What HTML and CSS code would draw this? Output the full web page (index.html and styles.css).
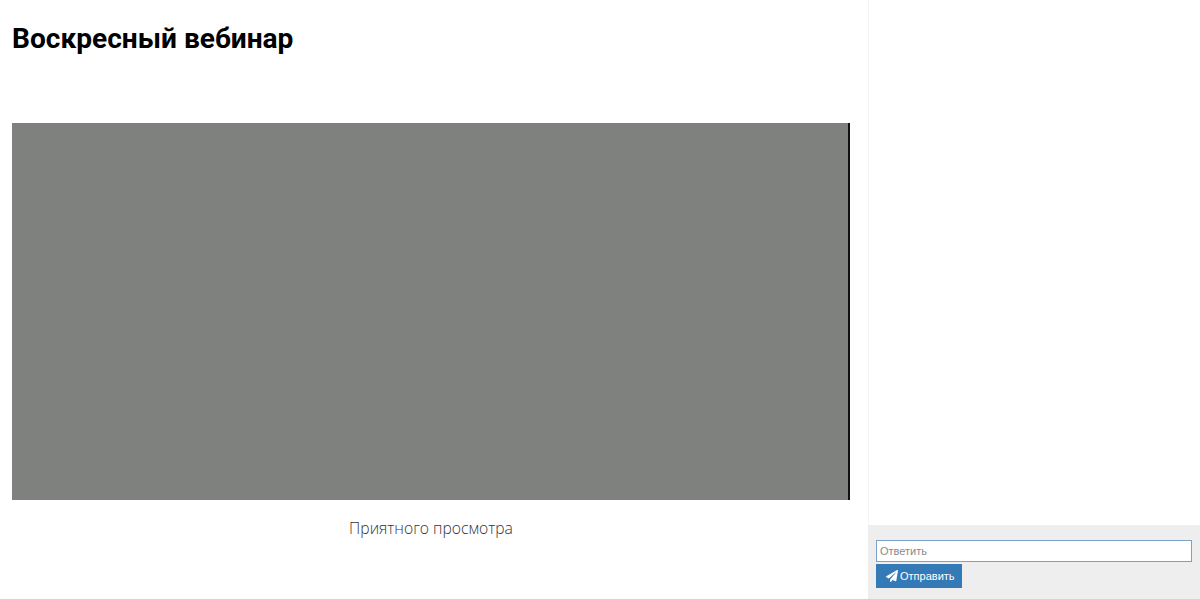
FILE: index.html
```html
<!DOCTYPE html>
<html lang="en">
<head>
    <meta charset="UTF-8">
    <meta name="viewport" content="width=device-width, initial-scale=1.0">
    <title>Воскресный вебинар</title>
    <link rel="stylesheet" href="styles.css">
</head>
<body>
    <div class="layout">
        <!-- Video column -->
        <div class="main">
            <h1>Воскресный вебинар</h1>
            <div class="video"></div>
            <p class="caption">Приятного просмотра</p>
        </div>

        <!-- Chat column -->
        <div class="chat">
            <div class="messages"></div>
            <form class="reply-form">
                <input class="reply-input" type="text" placeholder="Ответить">
                <button class="btn" type="button">
                    <svg class="btn-icon" viewBox="0 0 512 512"><path fill="currentColor" d="M476 3.2 12.5 270.6c-18.100 10.400-15.800 35.600 2.200 43.200L121 358.400l287.300-253.200c5.500-4.900 13.300 2.600 8.600 8.300L176 407v80.500c0 23.600 28.500 32.900 42.500 15.800L282 426l124.600 52.200c14.200 6 30.400-2.900 33-18.200l72-432C515 7.800 493.300-6.800 476 3.200z"/></svg>
                    Отправить
                </button>
            </form>
        </div>
    </div>
</body>
</html>
```

FILE: styles.css
```css
* {
    margin: 0;
    padding: 0;
    box-sizing: border-box;
}

html, body {
    height: 100%;
    overflow: hidden;
}

body {
    background: #fff;
    font-family: 'Liberation Sans', Arial, sans-serif;
}

.layout {
    display: flex;
    height: 599px;
}

.main {
    width: 868px;
    padding: 0 18px 0 12px;
}

h1 {
    font-family: 'Roboto', sans-serif;
    font-size: 28.1px;
    font-weight: 700;
    line-height: 32px;
    padding-top: 23px;
    color: #000;
}

.video {
    width: 838px;
    height: 377px;
    margin-top: 68px;
    background: #7f817e;
    border-right: 2px solid #111;
}

.caption {
    margin-top: 17px;
    font-family: 'Open Sans', sans-serif;
    font-size: 15.7px;
    font-weight: 300;
    line-height: 22px;
    text-align: center;
    color: #333;
}

.chat {
    flex: 1;
    display: flex;
    flex-direction: column;
}

.messages {
    flex: 1;
    border-left: 1px solid #f5f5f5;
}

.reply-form {
    height: 74px;
    padding: 15px 8px 0;
    background: #eee;
}

.reply-input {
    display: block;
    width: 316px;
    height: 22px;
    padding: 0 3px;
    border: 1px solid #7ba1c7;
    font-family: inherit;
    font-size: 11px;
    outline: none;
}

.reply-input::placeholder {
    color: #8a8a8a;
}

.btn {
    display: flex;
    align-items: center;
    gap: 2px;
    height: 24px;
    width: 86px;
    margin-top: 2px;
    padding-left: 10px;
    background: #337ab7;
    color: #fff;
    border: none;
    font-family: inherit;
    font-size: 11px;
}

.btn-icon {
    width: 12px;
    height: 12px;
}
```
